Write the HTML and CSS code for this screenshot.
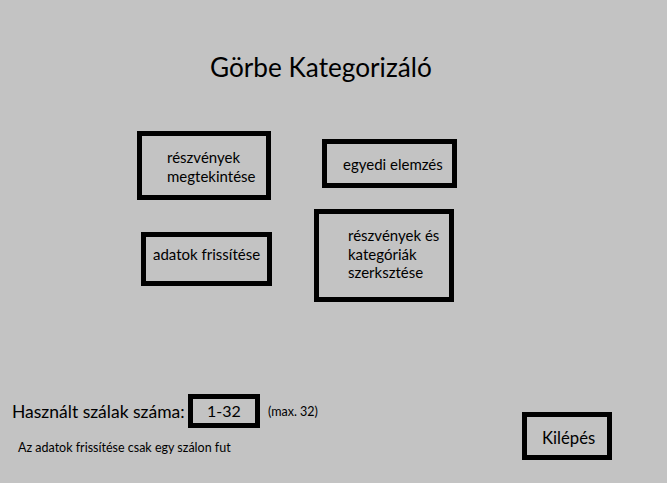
FILE: index.html
```html
<!DOCTYPE html>
<html lang="hu">
<head>
    <meta charset="UTF-8">
    <title>Görbe Kategorizáló</title>
    <link rel="stylesheet" href="styles.css">
</head>
<body>
    <div class="form">
        <h1 class="title">Görbe Kategorizáló</h1>

        <div class="menu">
            <div class="col col-left">
                <button class="box box-view">részvények<br>megtekintése</button>
                <button class="box box-refresh">adatok frissítése</button>
            </div>
            <div class="col col-right">
                <button class="box box-single">egyedi elemzés</button>
                <button class="box box-edit">részvények és<br>kategóriák<br>szerksztése</button>
            </div>
        </div>

        <div class="bottom">
            <div class="threads">
                <div class="thread-row">
                    <label class="thread-label" for="threads">Használt szálak száma:</label>
                    <div class="thread-input" id="threads">1-32</div>
                    <span class="thread-max">(max. 32)</span>
                </div>
                <p class="note">Az adatok frissítése csak egy szálon fut</p>
            </div>
            <button class="box box-exit">Kilépés</button>
        </div>
    </div>
</body>
</html>
```

FILE: styles.css
```css
body {
    margin: 0;
    font-family: 'Lato', 'Liberation Sans', sans-serif;
    background-color: #c3c3c3;
    color: #000;
}

.form {
    width: 667px;
    height: 483px;
    overflow: hidden;
}

.title {
    margin: 0;
    padding: 50px 0 0 210px;
    font-size: 26.2px;
    font-weight: normal;
    line-height: 34px;
}

.menu {
    display: flex;
    margin-top: 47px;
}

.col {
    display: flex;
    flex-direction: column;
    align-items: flex-start;
}

.col-left {
    margin-left: 137px;
    width: 177px;
}

/* buttons keep their text at the top, not centred */
.box {
    display: flex;
    align-items: flex-start;
    box-sizing: border-box;
    border: 5px solid #000;
    background: transparent;
    font-family: inherit;
    font-size: 15px;
    line-height: 19px;
    text-align: left;
    color: #000;
    margin: 0;
    cursor: pointer;
}

.box-view {
    width: 134px;
    height: 69px;
    padding: 12px 0 0 25px;
}

.box-refresh {
    width: 131px;
    height: 54px;
    margin: 32px 0 0 4px;
    padding: 8px 0 0 7px;
}

.box-single {
    width: 135px;
    height: 49px;
    margin: 8px 0 0 8px;
    padding: 11px 0 0 16px;
}

.box-edit {
    width: 140px;
    height: 93px;
    margin-top: 21px;
    padding: 12px 0 0 29px;
    line-height: 18.5px;
}

.bottom {
    display: flex;
    align-items: flex-start;
    margin-top: 92px;
}

.threads {
    width: 522px;
}

.thread-row {
    display: flex;
    align-items: center;
    height: 34px;
}

.thread-label {
    margin-left: 12px;
    width: 176px;
    font-size: 17.5px;
    white-space: nowrap;
}

.thread-input {
    box-sizing: border-box;
    width: 72px;
    height: 34px;
    border: 5px solid #000;
    font-size: 16px;
    line-height: 24px;
    padding-left: 14px;
}

.thread-max {
    margin-left: 8px;
    font-size: 12.5px;
}

.note {
    margin: 12px 0 0 18px;
    font-size: 12.5px;
    line-height: 15px;
}

.box-exit {
    width: 90px;
    height: 48px;
    margin-top: 18px;
    padding: 9px 0 0 15px;
    font-size: 16.7px;
    line-height: 24px;
}
```
